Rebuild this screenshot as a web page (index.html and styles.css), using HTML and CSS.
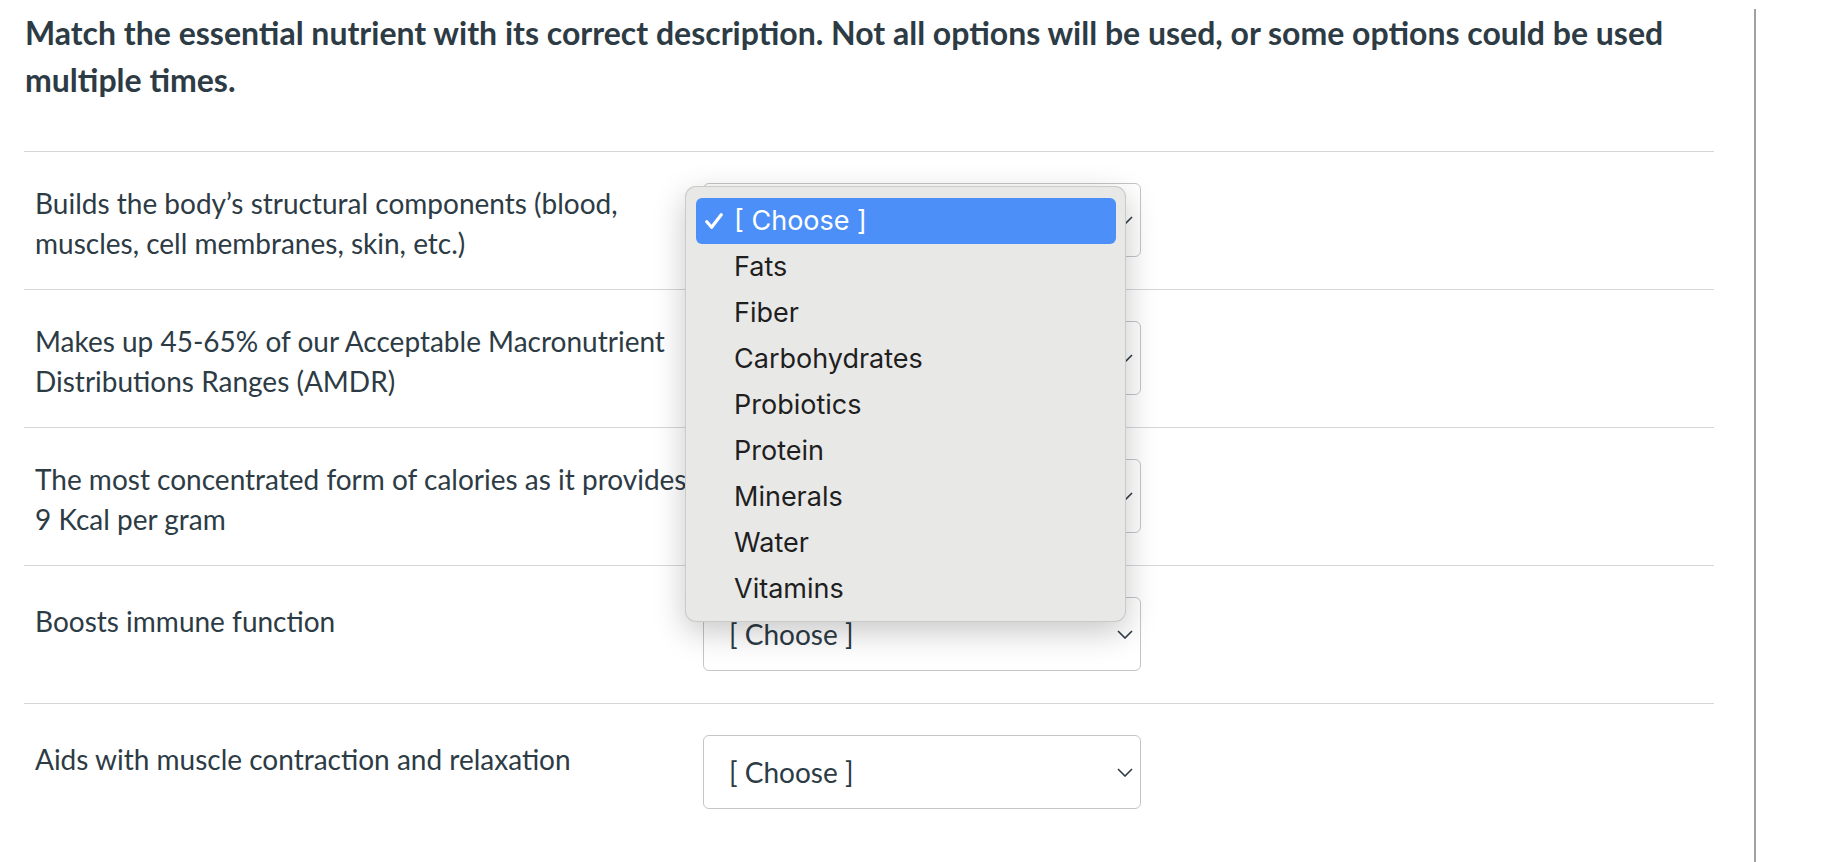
FILE: index.html
```html
<!DOCTYPE html>
<html lang="en">
<head>
  <meta charset="UTF-8">
  <title>Matching Question</title>
  <link rel="stylesheet" href="styles.css">
</head>
<body>

  <div class="page">
    <div class="question">
      <h2 class="question-text">Match the essential nutrient with its correct description. Not all options will be used, or some options could be used multiple times.</h2>

      <!-- Answer rows -->
      <div class="answer">
        <div class="answer-label">Builds the body’s structural components (blood, muscles, cell membranes, skin, etc.)</div>
        <div class="select-wrap">
          <div class="select">
            <span>[ Choose ]</span>
            <svg class="chevron" width="16" height="9" viewBox="0 0 16 9"><polyline points="1,1 8,8 15,1" /></svg>
          </div>

          <!-- Open dropdown menu -->
          <ul class="menu">
            <li class="selected">
              <svg class="check" width="18" height="16" viewBox="0 0 18 16"><polyline points="1.8,8.8 6.6,14.2 16.2,1.8" /></svg>
              [ Choose ]
            </li>
            <li>Fats</li>
            <li>Fiber</li>
            <li>Carbohydrates</li>
            <li>Probiotics</li>
            <li>Protein</li>
            <li>Minerals</li>
            <li>Water</li>
            <li>Vitamins</li>
          </ul>
        </div>
      </div>

      <div class="answer">
        <div class="answer-label">Makes up 45-65% of our Acceptable Macronutrient Distributions Ranges (AMDR)</div>
        <div class="select-wrap">
          <div class="select">
            <span>[ Choose ]</span>
            <svg class="chevron" width="16" height="9" viewBox="0 0 16 9"><polyline points="1,1 8,8 15,1" /></svg>
          </div>
        </div>
      </div>

      <div class="answer">
        <div class="answer-label">The most concentrated form of calories as it provides 9 Kcal per gram</div>
        <div class="select-wrap">
          <div class="select">
            <span>[ Choose ]</span>
            <svg class="chevron" width="16" height="9" viewBox="0 0 16 9"><polyline points="1,1 8,8 15,1" /></svg>
          </div>
        </div>
      </div>

      <div class="answer">
        <div class="answer-label single">Boosts immune function</div>
        <div class="select-wrap">
          <div class="select">
            <span>[ Choose ]</span>
            <svg class="chevron" width="16" height="9" viewBox="0 0 16 9"><polyline points="1,1 8,8 15,1" /></svg>
          </div>
        </div>
      </div>

      <div class="answer">
        <div class="answer-label single">Aids with muscle contraction and relaxation</div>
        <div class="select-wrap">
          <div class="select">
            <span>[ Choose ]</span>
            <svg class="chevron" width="16" height="9" viewBox="0 0 16 9"><polyline points="1,1 8,8 15,1" /></svg>
          </div>
        </div>
      </div>
    </div>
  </div>

</body>
</html>
```

FILE: styles.css
```css
body {
  margin: 0;
  background: white;
  font-family: Lato, "Liberation Sans", sans-serif;
  color: #2d3b45;
}
.page {
  width: 1756px;
  min-height: 100vh;
  box-sizing: border-box;
  padding: 0 40px 0 24px;
  border-right: 2px solid #a0a0a0;
}
.question {
  width: 1690px;
}
.question-text {
  margin: 9px 0 48px 1px;
  font-size: 32px;
  line-height: 47px;
  font-weight: bold;
}
.answer {
  display: flex;
  align-items: flex-start;
  border-top: 1px solid #d4d7da;
  padding: 31px 0 26px;
}
.answer-label {
  width: 658px;
  padding-left: 11px;
  font-size: 28px;
  line-height: 40px;
}
.answer-label.single {
  padding-top: 4px;
}
.select-wrap {
  position: relative;
  margin: 0 0 6px 10px;
}
.select {
  width: 438px;
  height: 74px;
  box-sizing: border-box;
  border: 1px solid #c2c6c9;
  border-radius: 6px;
  display: flex;
  align-items: center;
  justify-content: space-between;
  padding: 0 7px 0 25px;
  font-size: 28px;
}
.chevron polyline {
  fill: none;
  stroke: #2d3b45;
  stroke-width: 1.6;
}
.menu {
  position: absolute;
  left: -18px;
  top: 3px;
  z-index: 10;
  width: 441px;
  box-sizing: border-box;
  margin: 0;
  padding: 11px 9px 9px 10px;
  list-style: none;
  background: #e8e8e7;
  border: 1px solid rgba(0,0,0,0.13);
  border-radius: 11px;
  box-shadow: 0 10px 32px rgba(0,0,0,0.22);
  font-family: Inter, "Noto Sans", sans-serif;
  font-size: 27px;
  color: #1f1f1f;
}
.menu li {
  height: 46px;
  line-height: 46px;
  padding-left: 38px;
  border-radius: 6px;
  position: relative;
}
.menu li.selected {
  background: #4c8ff8;
  color: white;
}
.check {
  position: absolute;
  left: 9px;
  top: 15px;
}
.check polyline {
  fill: none;
  stroke: white;
  stroke-width: 3.2;
  stroke-linecap: round;
  stroke-linejoin: round;
}
```
